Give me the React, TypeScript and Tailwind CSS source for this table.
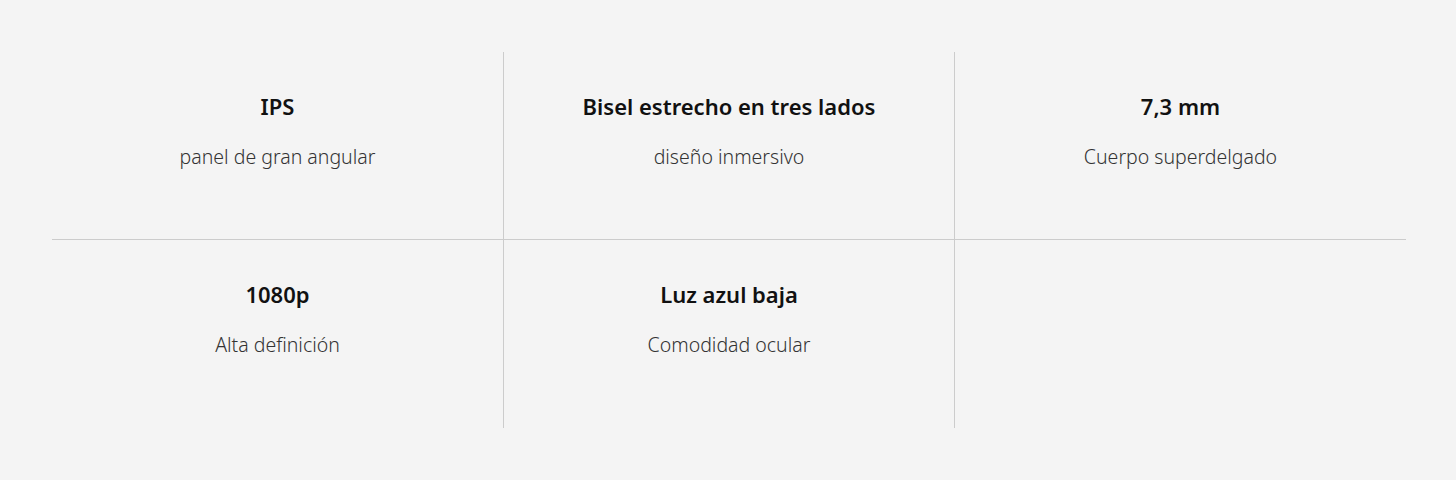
import React from "react";

const items = [
  { t: "IPS", s: "panel de gran angular" },
  { t: "Bisel estrecho en tres lados", s: "diseño inmersivo" },
  { t: "7,3 mm", s: "Cuerpo superdelgado" },
  { t: "1080p", s: "Alta definición" },
  { t: "Luz azul baja", s: "Comodidad ocular" },
  null,
];

export default function App() {
  return (
    <div className="w-[1456px] h-[480px] bg-[#f4f4f4] pt-[52px]" style={{ fontFamily: '"Noto Sans", "Open Sans", sans-serif' }}>
      <div className="w-[1354px] ml-[52px] grid grid-cols-[452px_451px_451px]">
        {items.map((it, i) => (
          <div
            key={i}
            className={
              "h-[188px] flex flex-col items-center pt-[39px] border-[#cccccc] " +
              (i % 3 !== 2 ? "border-r " : "") +
              (i < 3 ? "border-b " : "")
            }
          >
            {it && (
              <>
                <div className="text-[22px] leading-[30px] font-semibold text-[#111]">{it.t}</div>
                <div className="mt-[22px] text-[19.5px] leading-[28px] font-light text-[#333]">{it.s}</div>
              </>
            )}
          </div>
        ))}
      </div>
    </div>
  );
}
